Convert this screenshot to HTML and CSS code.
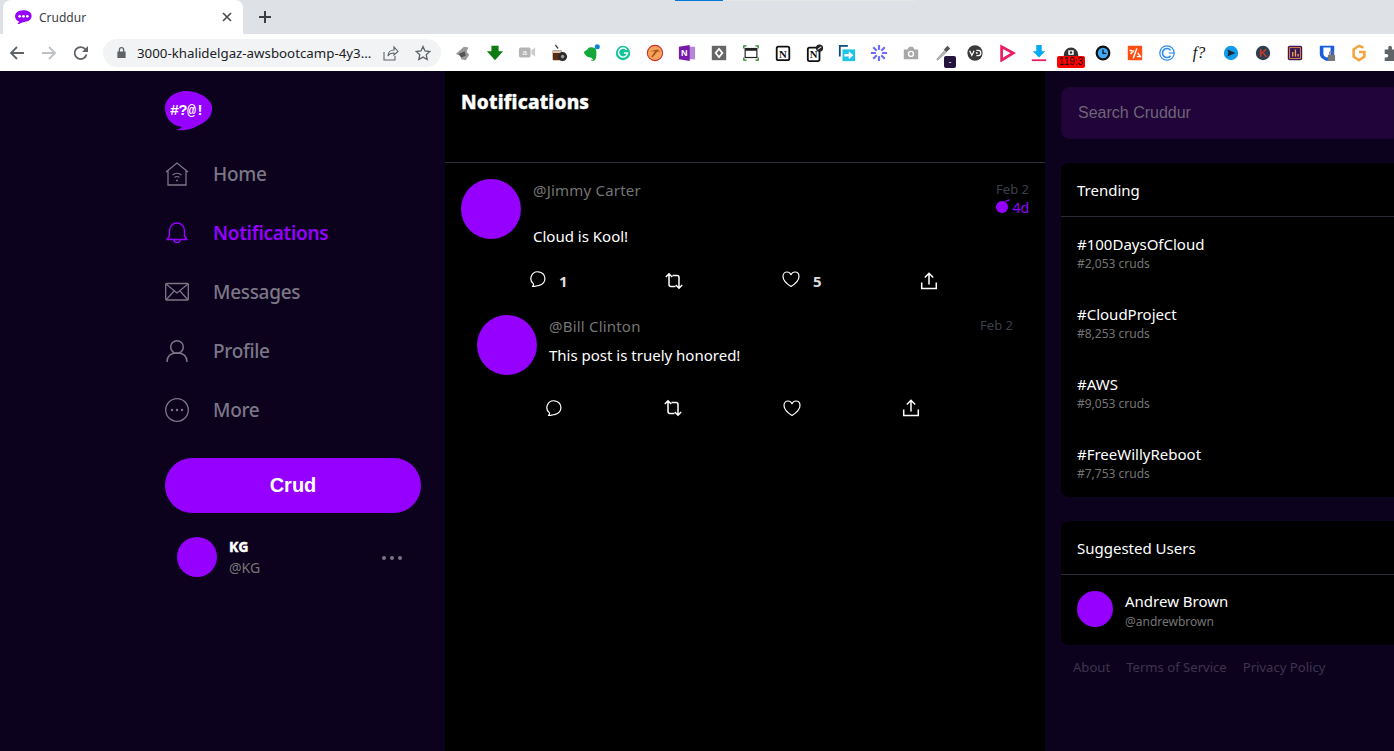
FILE: index.html
```html
<!DOCTYPE html>
<html lang="en">
<head>
    <meta charset="UTF-8">
    <meta name="viewport" content="width=device-width, initial-scale=1.0">
    <title>Cruddur</title>
    <link rel="stylesheet" href="styles.css">
</head>
<body>
    <!-- browser window chrome -->
    <div class="tabbar">
        <div class="load-bar"><span class="load-blue"></span><span class="load-grey"></span></div>
        <div class="tab">
            <svg class="tab-favicon" viewBox="0 0 48 40"><path d="M22 1C32 0 46 4 47 16c1 11-8 17-20 18-5 0-9 2-14 5-3 1-6 1-6 0 2-1 4-3 4-6C3 29 0 24 0 18 0 8 10 2 22 1z" fill="#9500ff"/><circle cx="13" cy="18" r="4" fill="#fff"/><circle cx="24" cy="18" r="4" fill="#fff"/><circle cx="35" cy="18" r="4" fill="#fff"/></svg>
            <span class="tab-title">Cruddur</span>
            <svg class="tab-close" viewBox="0 0 10 10"><path d="M1 1l8 8M9 1l-8 8" stroke="#45494e" stroke-width="1.6"/></svg>
        </div>
        <svg class="tab-new" viewBox="0 0 14 14"><path d="M7 1v12M1 7h12" stroke="#3c4043" stroke-width="2"/></svg>
    </div>
    <div class="toolbar">
        <button class="tool"><svg viewBox="0 0 16 16"><path d="M15 8H2M8 2L2 8l6 6" fill="none" stroke="#5f6368" stroke-width="1.8"/></svg></button>
        <button class="tool"><svg viewBox="0 0 16 16"><path d="M1 8h13M8 2l6 6-6 6" fill="none" stroke="#bdc1c6" stroke-width="1.8"/></svg></button>
        <button class="tool"><svg viewBox="0 0 16 16"><path d="M13.5 9.5a6 6 0 1 1-1-5L14 6" fill="none" stroke="#5f6368" stroke-width="1.8"/><path d="M15 1v6H9z" fill="#5f6368"/></svg></button>
        <div class="omnibox">
            <svg class="lock" viewBox="0 0 12 14"><path d="M3 6V4a3 3 0 0 1 6 0v2h1.500v7h-9V6zM4.400 6h3.200V4a1.600 1.600 0 0 0-3.200 0z" fill="#5f6368"/></svg>
            <span class="url">3000-khalidelgaz-awsbootcamp-4y3...</span>
            <svg class="omni-icon" viewBox="0 0 16 16"><path d="M1 7v8h11v-4M5 11c0-4 3-6 6-6V2l4 4.500L11 10V8c-3 0-5 1-6 3z" fill="none" stroke="#5f6368" stroke-width="1.100"/></svg>
            <svg class="omni-icon" viewBox="0 0 16 16"><path d="M8 1.500l2 4.500 4.800.5-3.600 3.200 1 4.800L8 12.100 3.800 14.500l1-4.800L1.200 6.500 6 6z" fill="none" stroke="#5f6368" stroke-width="1.300"/></svg>
        </div>
        <div class="extensions">
            <span class="ext"><svg viewBox="0 0 20 20"><path d="M2 11l9-8 5 1-2 5 3 3-4 6-5-1-1-4z" fill="#9a9a9a"/><path d="M5 11l7-3 1 5-5 2z" fill="#555"/></svg></span>
            <span class="ext"><svg viewBox="0 0 20 20"><path d="M6 2h8v6h5l-9 10L1 8h5z" fill="#107c10"/></svg></span>
            <span class="ext"><svg viewBox="0 0 20 20"><rect x="1" y="4" width="13" height="11" rx="2" fill="#b5b5b5"/><path d="M15 7l4-3v10l-4-3z" fill="#ccc"/><text x="7.500" y="12.500" class="ext-text-a">a</text></svg></span>
            <span class="ext"><svg viewBox="0 0 20 20"><path d="M6 1l3 4" stroke="#444" stroke-width="1.500"/><rect x="3" y="7" width="10" height="11" rx="1" fill="#5c2c10"/><rect x="3" y="7" width="10" height="3" fill="#d8c5b5"/><circle cx="14" cy="14" r="5" fill="#2a2a2a"/><circle cx="14" cy="14" r="2" fill="#999"/></svg></span>
            <span class="ext ext-dot"><svg viewBox="0 0 20 20"><path d="M2 9l4-3c1-2 3-3 6-2 3 0 4 2 4 6 0 3 0 6-2 8-2 1-4 1-4-1 1 1 2 1 2 0 0-1-2-2-3-2-3 0-6-2-7-6z" fill="#14a83b"/><circle cx="17" cy="3" r="2.800" fill="#0a84d6"/></svg></span>
            <span class="ext"><svg viewBox="0 0 20 20"><circle cx="10" cy="10" r="8" fill="#15c39a"/><path d="M14 6.500A5 5 0 1 0 15 10h-4" fill="none" stroke="#fff" stroke-width="1.600"/></svg></span>
            <span class="ext"><svg viewBox="0 0 20 20"><circle cx="10" cy="10" r="8.500" fill="#f5a25d" stroke="#c9302c" stroke-width="1.200"/><path d="M4 8l9-2 3 3-3-1-6 7-1-1 4-6z" fill="#a5531c"/></svg></span>
            <span class="ext"><svg viewBox="0 0 20 20"><rect x="10" y="3" width="9" height="14" fill="#b388d9"/><path d="M1 3l12-2v18L1 17z" fill="#7719aa"/><text x="7" y="13" class="ext-text-n">N</text></svg></span>
            <span class="ext"><svg viewBox="0 0 20 20"><rect x="2" y="2" width="16" height="16" fill="#666"/><path d="M10 4l5 6-5 6-5-6z" fill="#fff"/><path d="M10 7l2.500 3-2.500 3-2.500-3z" fill="#666"/></svg></span>
            <span class="ext"><svg viewBox="0 0 20 20"><path d="M2 5V2h3M15 2h3v3M18 15v3h-3M5 18H2v-3" fill="none" stroke="#2a7d2a" stroke-width="1.400"/><rect x="3.500" y="5" width="13" height="10" fill="none" stroke="#222" stroke-width="1.300"/><rect x="3.500" y="5" width="13" height="2.500" fill="#222"/></svg></span>
            <span class="ext"><svg viewBox="0 0 20 20"><rect x="3" y="3" width="14" height="15" rx="2" fill="#fff" stroke="#111" stroke-width="2"/><text x="10" y="15" class="ext-text-notion">N</text></svg></span>
            <span class="ext"><svg viewBox="0 0 20 20"><rect x="2" y="4" width="13" height="15" rx="2" fill="#fff" stroke="#111" stroke-width="2"/><text x="8.500" y="16" class="ext-text-notion">N</text><circle cx="15" cy="4.500" r="4" fill="#222"/><path d="M13 6l4-3" stroke="#ddd" stroke-width="1.200"/></svg></span>
            <span class="ext"><svg viewBox="0 0 20 20"><path d="M2 14V2h9" fill="none" stroke="#0b4f7a" stroke-width="2"/><rect x="5" y="6" width="14" height="13" fill="#1cc4e8"/><path d="M7 11h5V8l5 4.500-5 4.500v-3H7z" fill="#fff"/></svg></span>
            <span class="ext"><svg viewBox="0 0 20 20"><g stroke="#6c6cf5" stroke-width="2.400"><path d="M10 1v18M1 10h18M3.600 3.600l12.800 12.800M16.400 3.600L3.600 16.400"/></g><circle cx="10" cy="10" r="3.500" fill="#fff"/></svg></span>
            <span class="ext"><svg viewBox="0 0 20 20"><path d="M2 6h4l2-3h4l2 3h4v11H2z" fill="#a8a8a8"/><circle cx="10" cy="11" r="3.500" fill="#fff"/><circle cx="10" cy="11" r="2" fill="#a8a8a8"/></svg></span>
            <span class="ext"><svg viewBox="0 0 20 20"><path d="M3 17l9-10 2 2-10 9z" fill="#bbb" stroke="#999"/><path d="M11 6l4-4 3 3-4 4z" fill="#555"/></svg><span class="ext-badge-dark">-</span></span>
            <span class="ext"><svg viewBox="0 0 20 20"><circle cx="10" cy="10" r="8.500" fill="#3a3a3a"/><path d="M4 7.500l2.500 5 2.500-5M11.500 7h2a3 3 0 0 1 0 6h-2M11 10h2" fill="none" stroke="#fff" stroke-width="1.400"/></svg></span>
            <span class="ext"><svg viewBox="0 0 20 20"><path d="M4 3l13 7-13 8z" fill="none" stroke="#e91e63" stroke-width="3"/></svg></span>
            <span class="ext"><svg viewBox="0 0 20 20"><path d="M7 1h6v7h4l-7 7-7-7h4z" fill="#03a9f4"/><rect x="2" y="17" width="16" height="2" fill="#e91e63"/></svg></span>
            <span class="ext"><svg viewBox="0 0 20 20"><path d="M2 12a8 8 0 0 1 16 0v3H2z" fill="#333"/><rect x="7" y="7" width="6" height="5" fill="#fff"/><circle cx="10" cy="9.500" r="1.400" fill="#333"/></svg><span class="ext-badge-red">119:3</span></span>
            <span class="ext"><svg viewBox="0 0 20 20"><circle cx="10" cy="10" r="7" fill="#3fa9f5" stroke="#111" stroke-width="2.500"/><path d="M10 6v4.500h3.500" fill="none" stroke="#111" stroke-width="1.400"/></svg></span>
            <span class="ext"><svg viewBox="0 0 20 20"><rect x="2" y="2" width="16" height="16" rx="1" fill="#ff4f12"/><path d="M4 7l4 1-3 3M12 5l-4 11M13 10l3 4h-4" fill="none" stroke="#fff" stroke-width="1.600"/></svg></span>
            <span class="ext"><svg viewBox="0 0 20 20"><circle cx="10" cy="10" r="8" fill="none" stroke="#2e8bf0" stroke-width="1.400"/><path d="M14 7a5 5 0 1 0 0 6" fill="none" stroke="#2e8bf0" stroke-width="1.800"/><path d="M12 10h6" stroke="#2e8bf0" stroke-width="1.200"/></svg></span>
            <span class="ext ext-formula">f?</span>
            <span class="ext"><svg viewBox="0 0 20 20"><circle cx="10" cy="10" r="8" fill="#129be8"/><path d="M6 6l9 4-9 4 1-4z" fill="#1b2a38"/></svg></span>
            <span class="ext"><svg viewBox="0 0 20 20"><circle cx="10" cy="10" r="8" fill="#2c3e50"/><text x="10" y="14.500" class="ext-text-k">K</text></svg></span>
            <span class="ext"><svg viewBox="0 0 20 20"><rect x="2" y="2" width="16" height="16" rx="2" fill="#3a1a55"/><rect x="4" y="4" width="12" height="12" fill="none" stroke="#ef8a4a" stroke-width="1"/><path d="M7.500 9v5M10.500 6v8M13.500 11v3" stroke="#f2a65a" stroke-width="1.500"/></svg></span>
            <span class="ext"><svg viewBox="0 0 20 20"><path d="M2 2h16v9c0 4-4 6-8 8-4-2-8-4-8-8z" fill="#175ddc"/><path d="M6 4h8v7c0 2-2 3-4 4-2-1-4-2-4-4z" fill="#fff"/><rect x="11" y="12" width="8" height="7" rx="1" fill="#777"/><path d="M13 12v-2a2 2 0 0 1 4 0v2" fill="none" stroke="#777" stroke-width="1.200"/></svg></span>
            <span class="ext"><svg viewBox="0 0 20 20"><path d="M15 4l-5-2-6 4v8l6 4 6-4V9h-6" fill="none" stroke="#f5a13c" stroke-width="2.800"/></svg></span>
            <span class="ext"><svg viewBox="0 0 20 20"><path d="M3 6h4V4a2 2 0 0 1 4 0v2h5v4h2a2 2 0 0 1 0 4h-2v5H3v-4h2a2 2 0 0 0 0-4H3z" fill="#5f6368"/></svg></span>
        </div>
    </div>

    <!-- the app itself -->
    <div class="app">
        <aside class="sidebar">
            <svg class="logo" viewBox="0 0 48 40">
                <path d="M22 0C30 0 44 5 47 15c1 10-5 16-15 20-6 4-14 5-21 4 3-1 5-2 6-3C8 35 0 28 0 17 0 7 10 0 22 0z" fill="#9500ff"/>
                <text x="5" y="24" class="logo-text">#?@!</text>
            </svg>
            <nav class="nav">
                <a class="nav-item">
                    <svg class="nav-icon" viewBox="0 0 24 24"><path d="M1 10L12 1l11 9M3 8.500V23h18V8.500" fill="none" stroke="#7b7786" stroke-width="1.300"/><path d="M7.500 13a7 7 0 0 1 9 0M9.500 15.500a4 4 0 0 1 5 0" fill="none" stroke="#7b7786" stroke-width="1.200"/><circle cx="12" cy="18.500" r="1" fill="#7b7786"/></svg>
                    <span>Home</span>
                </a>
                <a class="nav-item active">
                    <svg class="nav-icon" viewBox="0 0 24 24"><path d="M4.500 15V9.500a7.500 7.500 0 0 1 15 0V15l2.500 3.500H2z" fill="none" stroke="#9500ff" stroke-width="1.400" stroke-linejoin="round"/><path d="M9 19a3 2.600 0 0 0 6 0" fill="none" stroke="#9500ff" stroke-width="1.400"/></svg>
                    <span>Notifications</span>
                </a>
                <a class="nav-item">
                    <svg class="nav-icon" viewBox="0 0 24 24"><rect x="0.700" y="3.500" width="22.600" height="16.500" rx="1" fill="none" stroke="#7b7786" stroke-width="1.300"/><path d="M1 4l11 9 11-9M1 20l8-9M23 20l-8-9" fill="none" stroke="#7b7786" stroke-width="1.200"/></svg>
                    <span>Messages</span>
                </a>
                <a class="nav-item">
                    <svg class="nav-icon" viewBox="0 0 24 24"><circle cx="12" cy="8" r="6.300" fill="none" stroke="#7b7786" stroke-width="1.500"/><path d="M2 23c0-6 4-9 10-9s10 3 10 9" fill="none" stroke="#7b7786" stroke-width="1.500"/></svg>
                    <span>Profile</span>
                </a>
                <a class="nav-item">
                    <svg class="nav-icon" viewBox="0 0 24 24"><circle cx="12" cy="12" r="11.300" fill="none" stroke="#7b7786" stroke-width="1.300"/><circle cx="7" cy="12" r="1.200" fill="#7b7786"/><circle cx="12" cy="12" r="1.200" fill="#7b7786"/><circle cx="17" cy="12" r="1.200" fill="#7b7786"/></svg>
                    <span>More</span>
                </a>
            </nav>
            <button class="crud-btn">Crud</button>
            <div class="profile">
                <div class="avatar avatar-profile"></div>
                <div class="profile-names">
                    <div class="profile-name">KG</div>
                    <div class="profile-handle">@KG</div>
                </div>
                <div class="profile-more"><i></i><i></i><i></i></div>
            </div>
        </aside>

        <main class="feed">
            <div class="feed-header"><h1>Notifications</h1></div>

            <article class="activity">
                <div class="avatar avatar-big"></div>
                <div class="activity-body">
                    <div class="activity-meta">
                        <span class="handle">@Jimmy Carter</span>
                        <div class="times">
                            <div class="time">Feb 2</div>
                            <div class="expires">
                                <svg class="bomb" viewBox="0 0 14 14"><circle cx="6" cy="8" r="6" fill="#9500ff"/><path d="M9 3.500c1-1.600 2.500-2.500 4.500-2.500" fill="none" stroke="#9500ff" stroke-width="1.300"/></svg>
                                <span>4d</span>
                            </div>
                        </div>
                    </div>
                    <div class="message message-top">Cloud is Kool!</div>
                    <div class="actions">
                        <div class="action has-count">
                            <svg class="icon-reply" viewBox="0 0 16 16"><path d="M8.500.8a6.800 6.800 0 0 1 .7 13.500c-2 .4-5.200 1.500-6.700 1.200.7-.7 1.200-1.700 1-2.600A6.800 6.800 0 0 1 8.500.8z" fill="none" stroke="#fff" stroke-width="1.200" stroke-linejoin="round"/></svg>
                            <span class="count">1</span>
                        </div>
                        <div class="action">
                            <svg class="icon-retweet" viewBox="0 0 18 18"><path d="M4 2v10.500a2 2 0 0 0 2 2h4.500M.8 5L4 1.800 7.200 5M14 16V5.500a2 2 0 0 0-2-2H7.500M10.800 13l3.200 3.200 3.200-3.200" fill="none" stroke="#fff" stroke-width="1.500"/></svg>
                        </div>
                        <div class="action has-count">
                            <svg class="icon-heart" viewBox="0 0 18 18"><path d="M9 16.500C5 14 1 11 1 6.500 1 3.500 3 2 5 2c2 0 3.200 1 4 2.700C9.800 3 11 2 13 2c2 0 4 1.500 4 4.500 0 4.500-4 7.500-8 10z" fill="none" stroke="#fff" stroke-width="1.200" stroke-linejoin="round"/></svg>
                            <span class="count">5</span>
                        </div>
                        <div class="action">
                            <svg class="icon-share" viewBox="0 0 18 18"><path d="M9 12.500V1.500M4.800 5.500L9 1.300l4.200 4.200M1.700 10.500v6h14.600v-6" fill="none" stroke="#fff" stroke-width="1.500"/></svg>
                        </div>
                    </div>
                </div>
            </article>

            <article class="activity activity-nested">
                <div class="avatar avatar-big"></div>
                <div class="activity-body">
                    <div class="activity-meta">
                        <span class="handle">@Bill Clinton</span>
                        <div class="times">
                            <div class="time">Feb 2</div>
                        </div>
                    </div>
                    <div class="message">This post is truely honored!</div>
                    <div class="actions">
                        <div class="action">
                            <svg class="icon-reply" viewBox="0 0 16 16"><path d="M8.500.8a6.800 6.800 0 0 1 .7 13.500c-2 .4-5.200 1.500-6.700 1.200.7-.7 1.200-1.700 1-2.600A6.800 6.800 0 0 1 8.500.8z" fill="none" stroke="#fff" stroke-width="1.200" stroke-linejoin="round"/></svg>
                        </div>
                        <div class="action">
                            <svg class="icon-retweet" viewBox="0 0 18 18"><path d="M4 2v10.500a2 2 0 0 0 2 2h4.500M.8 5L4 1.800 7.200 5M14 16V5.500a2 2 0 0 0-2-2H7.500M10.800 13l3.200 3.200 3.200-3.200" fill="none" stroke="#fff" stroke-width="1.500"/></svg>
                        </div>
                        <div class="action">
                            <svg class="icon-heart" viewBox="0 0 18 18"><path d="M9 16.500C5 14 1 11 1 6.500 1 3.500 3 2 5 2c2 0 3.200 1 4 2.700C9.800 3 11 2 13 2c2 0 4 1.500 4 4.500 0 4.500-4 7.500-8 10z" fill="none" stroke="#fff" stroke-width="1.200" stroke-linejoin="round"/></svg>
                        </div>
                        <div class="action">
                            <svg class="icon-share" viewBox="0 0 18 18"><path d="M9 12.500V1.500M4.800 5.500L9 1.300l4.200 4.200M1.700 10.500v6h14.600v-6" fill="none" stroke="#fff" stroke-width="1.500"/></svg>
                        </div>
                    </div>
                </div>
            </article>
        </main>

        <aside class="rail">
            <input class="search" type="text" placeholder="Search Cruddur">
            <section class="box box-trending">
                <div class="box-title">Trending</div>
                <div class="trend">
                    <div class="trend-tag">#100DaysOfCloud</div>
                    <div class="trend-count">#2,053 cruds</div>
                </div>
                <div class="trend">
                    <div class="trend-tag">#CloudProject</div>
                    <div class="trend-count">#8,253 cruds</div>
                </div>
                <div class="trend">
                    <div class="trend-tag">#AWS</div>
                    <div class="trend-count">#9,053 cruds</div>
                </div>
                <div class="trend">
                    <div class="trend-tag">#FreeWillyReboot</div>
                    <div class="trend-count">#7,753 cruds</div>
                </div>
            </section>
            <section class="box box-suggested">
                <div class="box-title">Suggested Users</div>
                <div class="suggested-user">
                    <div class="avatar avatar-small"></div>
                    <div>
                        <div class="trend-tag">Andrew Brown</div>
                        <div class="trend-count user-handle">@andrewbrown</div>
                    </div>
                </div>
            </section>
            <footer class="rail-footer">
                <a>About</a>
                <a>Terms of Service</a>
                <a>Privacy Policy</a>
            </footer>
        </aside>
    </div>
</body>
</html>
```

FILE: styles.css
```css
:root {
    --purple: #9500ff;
    --side-bg: #0c021d;
    --nav-grey: #7b7786;
    --muted: #757575;
    --line: #2c2b38;
    --font-body: 'Noto Sans', 'Open Sans', sans-serif;
}

* {
    box-sizing: border-box;
}

html, body {
    margin: 0;
    height: 751px;
    overflow: hidden;
}

body {
    font-family: var(--font-body);
    background: var(--side-bg);
    color: #fff;
}

/* browser chrome */
.tabbar {
    position: relative;
    height: 34px;
    background: #dee1e6;
    display: flex;
    align-items: flex-end;
    padding-left: 3px;
}

.load-bar {
    position: absolute;
    top: 0;
    left: 675px;
    display: flex;
    height: 1px;
}

.load-blue {
    width: 48px;
    background: #0078d7;
}

.load-grey {
    width: 192px;
    background: #e6e6e6;
}

.tab {
    width: 240px;
    height: 34px;
    background: #fff;
    border-radius: 8px 8px 0 0;
    display: flex;
    align-items: center;
    padding: 0 11px 0 12px;
}

.tab-favicon {
    width: 17px;
    height: 14px;
}

.tab-title {
    margin-left: 7px;
    font-size: 12px;
    color: #3c4043;
    flex: 1;
}

.tab-close {
    width: 10px;
    height: 10px;
}

.tab-new {
    width: 14px;
    height: 14px;
    margin: 0 0 10px 15px;
}

.toolbar {
    height: 37px;
    background: #fff;
    display: flex;
    align-items: center;
    padding-left: 1px;
    overflow: hidden;
}

.tool {
    width: 32px;
    height: 32px;
    flex: none;
    padding: 0;
    border: none;
    background: none;
    display: flex;
    align-items: center;
    justify-content: center;
}

.tool svg {
    width: 16px;
    height: 16px;
}

.omnibox {
    width: 338px;
    height: 28px;
    flex: none;
    margin-left: 6px;
    border-radius: 14px;
    background: #f1f3f4;
    display: flex;
    align-items: center;
    padding-left: 13px;
}

.lock {
    width: 11px;
    height: 13px;
}

.url {
    margin-left: 10px;
    font-size: 13.300px;
    color: #202124;
    width: 246px;
    white-space: nowrap;
}

.omni-icon {
    width: 16px;
    height: 16px;
    flex: none;
}

.omni-icon + .omni-icon {
    margin-left: 16px;
}

.extensions {
    margin-left: 6px;
    display: flex;
    flex: none;
}

.ext {
    position: relative;
    width: 32px;
    height: 32px;
    flex: none;
    display: flex;
    align-items: center;
    justify-content: center;
}

.ext svg {
    width: 18px;
    height: 18px;
}

.ext-text-a {
    font: 9px 'Liberation Sans', sans-serif;
    fill: #fff;
    text-anchor: middle;
}

.ext-text-n {
    font: bold 10px 'Liberation Sans', sans-serif;
    fill: #fff;
    text-anchor: middle;
}

.ext-text-notion {
    font: bold 12px 'Liberation Serif', serif;
    fill: #111;
    text-anchor: middle;
}

.ext-text-k {
    font: bold 13px 'Liberation Sans', sans-serif;
    fill: #c0392b;
    text-anchor: middle;
}

.ext-formula {
    font: italic 16px 'Liberation Serif', serif;
    color: #111;
}

.ext-badge-dark {
    position: absolute;
    left: 17px;
    top: 19px;
    width: 12px;
    height: 12px;
    border-radius: 2px;
    background: #24133a;
    color: #fff;
    font-size: 8px;
    line-height: 12px;
    text-align: center;
}

.ext-badge-red {
    position: absolute;
    left: 2px;
    top: 19px;
    width: 28px;
    height: 12px;
    border-radius: 2px;
    background: #f00;
    color: #111;
    font: 10px/12px 'Liberation Sans', sans-serif;
    text-align: center;
}

/* app layout */
.app {
    height: 680px;
    display: flex;
    overflow: hidden;
}

.sidebar {
    width: 445px;
    flex: none;
    padding: 20px 24px 0 165px;
    background: var(--side-bg);
}

.logo {
    display: block;
    width: 48px;
    height: 40px;
}

.logo-text {
    font: bold 15px 'Liberation Mono', monospace;
    letter-spacing: -.5px;
    fill: #fff;
}

.nav {
    margin-top: 13px;
}

.nav-item {
    height: 59px;
    display: flex;
    align-items: center;
    gap: 24px;
    font-size: 19px;
    letter-spacing: -.3px;
    font-weight: 500;
    color: var(--nav-grey);
}

.nav-item.active {
    color: var(--purple);
    font-weight: 600;
}

.nav-icon {
    width: 24px;
    height: 24px;
    flex: none;
}

.crud-btn {
    display: block;
    width: 256px;
    height: 55px;
    margin-top: 19px;
    border: none;
    border-radius: 28px;
    background: var(--purple);
    color: #fff;
    font: bold 20px 'Liberation Sans', sans-serif;
}

.profile {
    margin-top: 24px;
    padding-left: 12px;
    display: flex;
    align-items: flex-start;
}

.avatar {
    border-radius: 50%;
    background: var(--purple);
    flex: none;
}

.avatar-profile {
    width: 40px;
    height: 40px;
}

.avatar-big {
    width: 60px;
    height: 60px;
}

.avatar-small {
    width: 36px;
    height: 36px;
}

.profile-names {
    margin-left: 12px;
    flex: 1;
}

.profile-name {
    font-size: 14px;
    font-weight: 800;
    line-height: 20px;
    -webkit-text-stroke: .3px #fff;
}

.profile-handle {
    font-size: 14px;
    line-height: 21px;
    color: var(--muted);
}

.profile-more {
    display: flex;
    align-self: center;
    gap: 4px;
    margin-right: 19px;
}

.profile-more i {
    width: 4px;
    height: 4px;
    border-radius: 50%;
    background: #77737f;
}

/* center column */
.feed {
    width: 600px;
    flex: none;
    background: #000;
}

.feed-header {
    height: 92px;
    padding: 18px 16px 0;
    border-bottom: 1px solid var(--line);
}

.feed-header h1 {
    margin: 0;
    font-size: 19px;
    line-height: 26px;
    font-weight: 800;
    letter-spacing: .2px;
    -webkit-text-stroke: .4px #fff;
}

.activity {
    display: flex;
    gap: 12px;
    padding: 16px 16px 0;
}

.activity-nested {
    padding: 24px 32px 0;
}

.activity-body {
    flex: 1;
}

.activity-meta {
    display: flex;
    justify-content: space-between;
    font-size: 15px;
}

.handle {
    line-height: 22px;
    letter-spacing: .2px;
    color: var(--muted);
}

.times {
    text-align: right;
}

.time {
    font-size: 13px;
    line-height: 20px;
    color: #3c3f4c;
}

.expires {
    display: flex;
    justify-content: flex-end;
    align-items: center;
    gap: 2px;
    font-size: 14px;
    line-height: 18px;
    color: var(--purple);
}

.bomb {
    width: 14px;
    height: 14px;
    margin-bottom: 4px;
}

.message {
    font-size: 15px;
    line-height: 22px;
    margin-top: 7px;
}

.message-top {
    margin-top: 8px;
}

.actions {
    display: grid;
    grid-template-columns: 135px 117px 138px auto;
    align-items: center;
    margin: 24px 0 0 -3px;
}

.activity-nested .actions {
    grid-template-columns: 118px 119px 119px auto;
    margin: 32px 0 0 -3px;
}

.action {
    display: flex;
    align-items: center;
    height: 20px;
}

.has-count svg {
    margin-bottom: 4px;
}

.count {
    margin-left: 13px;
    font-size: 15px;
    font-weight: 700;
    color: #ddd;
}

.icon-reply {
    width: 16px;
    height: 16px;
}

.icon-retweet, .icon-heart, .icon-share {
    width: 18px;
    height: 18px;
}

/* right column */
.rail {
    flex: 1;
    min-width: 0;
    padding: 16px 0 0 16px;
    background: var(--side-bg);
}

.search {
    display: block;
    width: 100%;
    height: 52px;
    padding: 0 16px;
    border: 1px solid #1d0533;
    border-radius: 8px 0 0 8px;
    outline: none;
    background: #20043a;
    font: 16px 'Liberation Sans', sans-serif;
    color: #fff;
}

.search::placeholder {
    color: #6e6577;
    opacity: 1;
}

.box {
    background: #000;
    border-radius: 8px 0 0 8px;
}

.box-trending {
    height: 334px;
    margin-top: 24px;
}

.box-suggested {
    height: 124px;
    margin-top: 24px;
}

.box-title {
    height: 54px;
    padding: 0 16px;
    display: flex;
    align-items: center;
    font-size: 15px;
    border-bottom: 1px solid var(--line);
}

.trend {
    height: 70px;
    padding: 17px 16px 0;
}

.trend-tag {
    font-size: 15px;
    line-height: 21px;
}

.trend-count {
    font-size: 12px;
    line-height: 17px;
    color: var(--muted);
}

.user-handle {
    margin-top: 1px;
}

.suggested-user {
    display: flex;
    align-items: flex-start;
    gap: 12px;
    padding: 16px 16px 0;
}

.rail-footer {
    display: flex;
    gap: 16px;
    padding: 12px 12px 0;
    font-size: 13.100px;
    line-height: 20px;
    color: #3f3450;
}
```
